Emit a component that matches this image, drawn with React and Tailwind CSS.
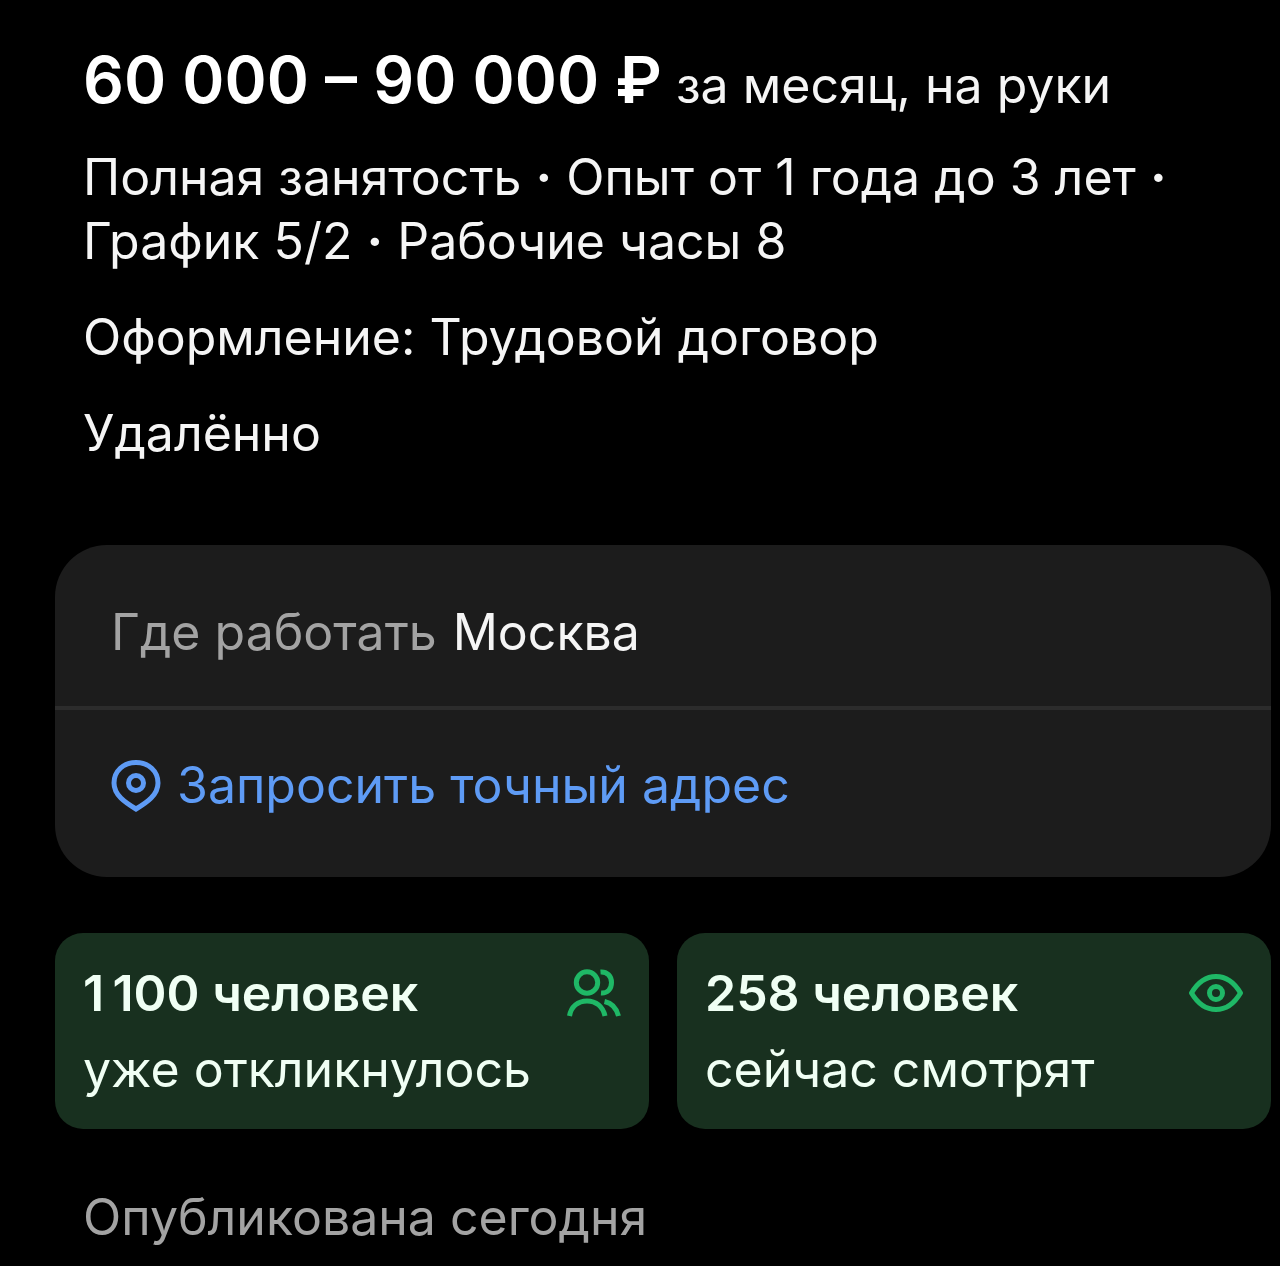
import React from "react";

const PinIcon = () => (
  <svg width="50" height="54" viewBox="1 0 50 54" fill="none" stroke="currentColor" strokeWidth="5" aria-hidden="true">
    <path d="M26 4.500C13.500 4.500 4 13 4 25C4 37 15 44.500 26 51C37 44.500 48 37 48 25C48 13 38.500 4.500 26 4.500Z" />
    <circle cx="26" cy="25" r="7.500" />
  </svg>
);

const PeopleIcon = () => (
  <svg width="54" height="48" viewBox="0 0 54 48" fill="none" stroke="currentColor" strokeWidth="5" aria-hidden="true">
    <circle cx="20" cy="13.500" r="10.700" />
    <path d="M2.500 47C4 37.500 11 32 20 32C29 32 36 37.500 38 47" />
    <path d="M33.500 3C40 2.500 44.500 7 44.500 13.500C44.500 20 40.500 24.500 34 24" />
    <path d="M37.500 32.500C44.500 34 49.500 39 51.500 47" />
  </svg>
);

const EyeIcon = () => (
  <svg width="54" height="40" viewBox="1 0 54 40" fill="none" stroke="currentColor" strokeWidth="5" strokeLinejoin="round" aria-hidden="true">
    <path d="M3.500 20C10 9 18 3.500 28 3.500C38 3.500 46 9 52.500 20C46 31 38 36.500 28 36.500C18 36.500 10 31 3.500 20Z" />
    <circle cx="28" cy="20" r="6.500" />
  </svg>
);

const Dot = () => <span className="font-bold">·</span>;

const stats = [
  { count: "1\u2009100 человек", label: "уже откликнулось", Icon: PeopleIcon },
  { count: "258 человек", label: "сейчас смотрят", Icon: EyeIcon },
];

const App = () => {
  return (
    <main className="min-h-screen bg-black pt-9 pr-[9px] pb-4 pl-[55px] font-['Inter',sans-serif] text-[50px] leading-[64px] text-[#f5f5f5]">
      {/* Salary and conditions */}
      <section className="flex flex-col gap-8 pl-7">
        <div>
          <h1 className="mb-4 leading-[88px] font-normal">
            <span className="text-[64px] font-semibold text-white">60 000 – 90 000 ₽</span>{" "}
            за месяц, на руки
          </h1>
          <p>
            Полная занятость <Dot /> Опыт от 1 года до 3 лет <Dot />
            <br />
            График 5/2 <Dot /> Рабочие часы 8
          </p>
        </div>
        <p>Оформление: Трудовой договор</p>
        <p>Удалённо</p>
      </section>

      {/* Location */}
      <section className="mt-20 rounded-[52px] bg-[#1c1c1c]">
        <dl className="flex gap-4 border-b-4 border-[#2c2c2c] px-14 pt-[55px] pb-[42px]">
          <dt className="text-[#a3a3a3]">Где работать</dt>
          <dd>Москва</dd>
        </dl>
        <div className="px-14 pt-[43px] pb-[60px]">
          <button type="button" className="flex items-center gap-4 text-[#5e9bf5]">
            <PinIcon />
            Запросить точный адрес
          </button>
        </div>
      </section>

      {/* Activity */}
      <section className="mt-14 grid grid-cols-2 gap-7">
        {stats.map(({ count, label, Icon }) => (
          <div key={label} className="rounded-[28px] bg-[#18301f] p-7 text-[#f0fff4]">
            <div className="mb-3 flex items-center justify-between">
              <h2 className="font-semibold">{count}</h2>
              <span className="text-[#1fb866]">
                <Icon />
              </span>
            </div>
            <p>{label}</p>
          </div>
        ))}
      </section>

      <p className="mt-14 pl-7 text-[#a3a3a3]">Опубликована сегодня</p>
    </main>
  );
};

export default App;
